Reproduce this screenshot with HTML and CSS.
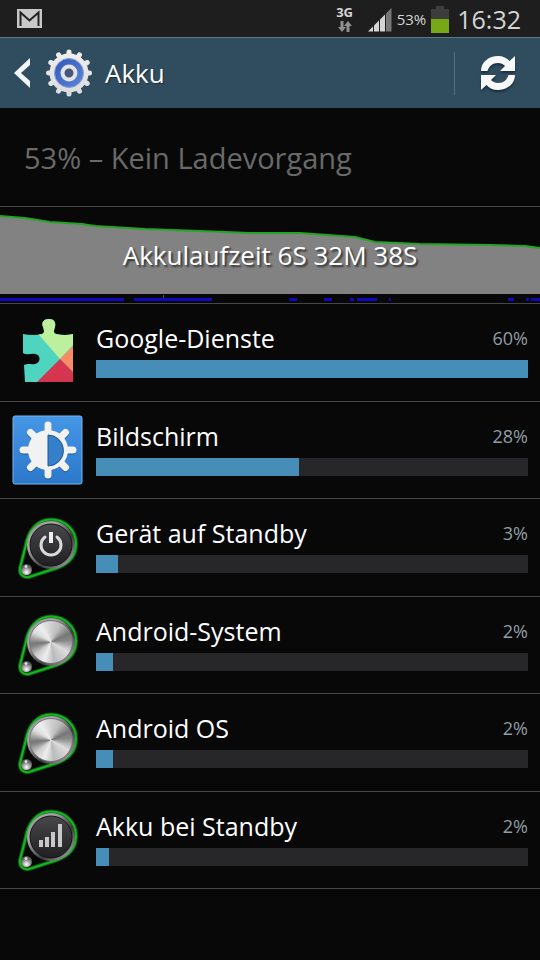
FILE: index.html
```
<!DOCTYPE html>
<html lang="de">
<head>
    <meta charset="UTF-8">
    <meta name="viewport" content="width=device-width, initial-scale=1.0">
    <title>Akku</title>
    <link rel="stylesheet" href="styles.css">
</head>
<body>
    <!-- shared icon parts -->
    <svg class="defs" width="0" height="0" aria-hidden="true">
        <defs>
            <linearGradient id="gearWhite" x1="0" y1="0" x2="0" y2="1">
                <stop offset="0" stop-color="#f0efec"/><stop offset="1" stop-color="#dcdcde"/>
            </linearGradient>
            <linearGradient id="gearBlue" x1="0" y1="0" x2="1" y2="1">
                <stop offset="0" stop-color="#2f58b8"/><stop offset="1" stop-color="#5f86dc"/>
            </linearGradient>
            <linearGradient id="tile" x1="0" y1="0" x2="0" y2="1">
                <stop offset="0" stop-color="#4696e6"/><stop offset="1" stop-color="#2c78cc"/>
            </linearGradient>
            <linearGradient id="rim" x1="0" y1="0" x2="1" y2="1">
                <stop offset="0" stop-color="#8c8c8e"/><stop offset=".3" stop-color="#aaa8ac"/>
                <stop offset=".62" stop-color="#3a3a3c"/><stop offset="1" stop-color="#c4c0c8"/>
            </linearGradient>
            <linearGradient id="dark" x1="0" y1="0" x2="0" y2="1">
                <stop offset="0" stop-color="#48484a"/><stop offset="1" stop-color="#202022"/>
            </linearGradient>
            <radialGradient id="ball" cx=".5" cy=".75" r=".6">
                <stop offset="0" stop-color="#fff"/><stop offset=".5" stop-color="#aaa"/><stop offset="1" stop-color="#555"/>
            </radialGradient>
            <g id="drop">
                <path d="M8.500 29.500C11 14 20 2.500 34 2.500C48 2.500 59 13 59 27C59 40 51 47 40 51L12 60C6 61 2 57 3 51Z" fill="#050805" stroke="#0b5a10" stroke-width="4"/>
                <path d="M8.500 29.500C11 14 20 2.500 34 2.500C48 2.500 59 13 59 27C59 40 51 47 40 51L12 60C6 61 2 57 3 51Z" fill="none" stroke="#19b422" stroke-width="2"/>
                <circle cx="9.500" cy="52.500" r="5.500" fill="url(#ball)"/>
                <path d="M5 51a5 5 0 0 1 9 0z" fill="#666"/>
                <circle cx="9" cy="49.500" r="1.500" fill="#ddd"/>
            </g>
            <g id="darkDisc">
                <circle cx="34" cy="28" r="24" fill="url(#rim)"/>
                <circle cx="34" cy="28" r="21" fill="url(#dark)" stroke="#151515"/>
            </g>
        </defs>
    </svg>

    <div class="statusbar">
        <svg class="mail" width="25" height="19" viewBox="0 0 25 19">
            <rect width="25" height="19" fill="#c8c8c8"/>
            <path d="M3.500 17V3.500L12.500 11.500L21.500 3.500V17" fill="none" stroke="#222" stroke-width="2"/>
        </svg>
        <div class="network">
            <span>3G</span>
            <svg width="14" height="11" viewBox="0 0 14 11">
                <path d="M2.500 0h3v6H8L4 11L0 6h2.500zM8.500 11h3V5H14L10 0L6 5h2.500z" fill="#909090"/>
            </svg>
        </div>
        <svg class="signal" width="24" height="24" viewBox="0 0 24 24">
            <path d="M0 23.500L5 18.500V23.500zM6 17.500L11 12.500V23.500H6zM12 11.500L17 6.500V23.500H12z" fill="#d4d4d4"/>
            <path d="M18 5.500L23.500 0V23.500H18z" fill="#777"/>
        </svg>
        <span class="charge">53%</span>
        <svg class="battery" width="18" height="28" viewBox="0 0 18 28">
            <path d="M5 1H13V4H18V28H0V4H5z" fill="#3d3d3d"/>
            <rect y="14" width="18" height="14" fill="#75aa16"/>
        </svg>
        <time class="clock">16:32</time>
    </div>

    <header class="actionbar">
        <button class="back" type="button" aria-label="Zurück">
            <svg width="18" height="32" viewBox="0 0 18 32">
                <path d="M16 1V8L7 16L16 24V31L0 16z" fill="#f2f6f8"/>
            </svg>
        </button>
        <svg class="gear" width="48" height="48" viewBox="0 0 48 48">
            <g stroke="url(#gearWhite)" stroke-width="5" stroke-linecap="round">
                <path d="M24 3V45M3.500 24.100L44.500 23.900M13.500 5.800L34.500 42.200M34.500 5.800L13.500 42.200M5.800 13.500L42.200 34.500M42.200 13.500L5.800 34.500"/>
            </g>
            <circle cx="24" cy="24" r="19.500" fill="url(#gearWhite)"/>
            <circle cx="24" cy="24" r="14.500" fill="url(#gearBlue)" stroke="#8ba2d4"/>
            <circle cx="24" cy="24" r="6.500" fill="#46597c" stroke="#e2e4e8" stroke-width="4"/>
        </svg>
        <h1>Akku</h1>
        <button class="refresh" type="button" aria-label="Aktualisieren">
            <svg width="36" height="36" viewBox="0 0 36 36">
                <path d="M1 16C1 7 9 1 18 1C23 1 27 3 29.500 6L35 1V16H20L25 11C23 9 21 8 18 8C12.500 8 9 11 7.500 16z" fill="#f6f8fa"/>
                <path d="M35 20C35 29 27 35 18 35C13 35 9 33 6.500 30L1 35V20H16L11 25C13 27 15 28 18 28C23.500 28 27 25 28.500 20z" fill="#f6f8fa"/>
            </svg>
        </button>
    </header>

    <main>
        <p class="status">53% – Kein Ladevorgang</p>

        <a class="history" href="#">
            <svg class="graph" viewBox="0 0 540 87" preserveAspectRatio="none">
                <path d="M0 9L25 11L50 15L82 17L95 19L145 22L200 24L250 26L300 26L355 30L375 35L420 37L490 38L525 39L540 41V87H0z" fill="#828282"/>
                <path d="M0 9L25 11L50 15L82 17L95 19L145 22L200 24L250 26L300 26L355 30L375 35L420 37L490 38L525 39L540 41" fill="none" stroke="#22a622" stroke-width="2"/>
            </svg>
            <svg class="awake" viewBox="0 0 540 9" preserveAspectRatio="none">
                <path d="M0 5.500H124M134 5.500H212M289 5.500H297M324 5.500H332M350 5.500H354M357 5.500H377M389 5.500H391M508 5.500H514M526 5.500H529M531 5.500H540" stroke="#1008c0" stroke-width="3"/>
                <path d="M163.500 1V4" stroke="#3c5a48"/>
            </svg>
            <span class="runtime">Akkulaufzeit 6S 32M 38S</span>
        </a>

        <ul class="usage">
            <li>
                <svg class="icon" width="72" height="72" viewBox="0 0 72 72">
                    <clipPath id="puzzle">
                        <path d="M11 17Q21 19 30 17C33 16 32 13 31 10C29 5 32 2 37 2C42 2 44 5 43 10C42 13 41 16 44 17Q53 19 61 17V65H13L12 48C17 46 19 48 23 47C29 46 29 37 23 37C19 36 16 39 11 36z"/>
                    </clipPath>
                    <g clip-path="url(#puzzle)">
                        <rect width="72" height="72" fill="#4fd4c0"/>
                        <path d="M21 11L48 42L72 16V0H20z" fill="#bcf09c"/>
                        <path d="M48 42L72 18V66z" fill="#f88a66"/>
                        <path d="M48 42L72 66H24z" fill="#d4354f"/>
                    </g>
                </svg>
                <div class="info">
                    <span class="name">Google-Dienste</span><span class="percent">60%</span>
                    <div class="bar"><div class="fill" style="width: 100%"></div></div>
                </div>
            </li>
            <li>
                <svg class="icon" width="72" height="72" viewBox="0 0 72 72">
                    <rect x="1" y="2" width="69" height="68" rx="2" fill="url(#tile)" stroke="#78b4f0"/>
                    <g stroke="#1c5796" stroke-width="7" stroke-linecap="round" transform="translate(0 1)">
                        <path d="M36 11V61M11 36H61M18.500 18.500L53.500 53.500M18.500 53.500L53.500 18.500"/>
                    </g>
                    <path d="M36 11V61M11 36H61M18.500 18.500L53.500 53.500M18.500 53.500L53.500 18.500" stroke="#f2f2f2" stroke-width="7" stroke-linecap="round"/>
                    <circle cx="36" cy="36" r="20" fill="#f2f2f2"/>
                    <path d="M36 21A15 15 0 0 1 36 52z" fill="#3580cc" stroke="#24568c"/>
                </svg>
                <div class="info">
                    <span class="name">Bildschirm</span><span class="percent">28%</span>
                    <div class="bar"><div class="fill" style="width: 47%"></div></div>
                </div>
            </li>
            <li>
                <svg class="icon drop" width="62" height="62" viewBox="0 0 62 62">
                    <use href="#drop"/>
                    <use href="#darkDisc"/>
                    <path d="M28 20A10 10 0 1 0 40 20" fill="none" stroke="#dadada" stroke-width="3" stroke-linecap="round"/>
                    <path d="M34 15V26" stroke="#eee" stroke-width="4"/>
                </svg>
                <div class="info">
                    <span class="name">Gerät auf Standby</span><span class="percent">3%</span>
                    <div class="bar"><div class="fill" style="width: 5%"></div></div>
                </div>
            </li>
            <li>
                <svg class="icon drop" width="62" height="62" viewBox="0 0 62 62">
                    <use href="#drop"/>
                    <circle cx="34" cy="28" r="24" fill="url(#rim)"/>
                    <foreignObject x="12" y="6" width="44" height="44"><div class="metal"></div></foreignObject>
                </svg>
                <div class="info">
                    <span class="name">Android-System</span><span class="percent">2%</span>
                    <div class="bar"><div class="fill" style="width: 4%"></div></div>
                </div>
            </li>
            <li>
                <svg class="icon drop" width="62" height="62" viewBox="0 0 62 62">
                    <use href="#drop"/>
                    <circle cx="34" cy="28" r="24" fill="url(#rim)"/>
                    <foreignObject x="12" y="6" width="44" height="44"><div class="metal"></div></foreignObject>
                </svg>
                <div class="info">
                    <span class="name">Android OS</span><span class="percent">2%</span>
                    <div class="bar"><div class="fill" style="width: 4%"></div></div>
                </div>
            </li>
            <li>
                <svg class="icon drop" width="62" height="62" viewBox="0 0 62 62">
                    <use href="#drop"/>
                    <use href="#darkDisc"/>
                    <path d="M22 31h4v7h-4zM28 28h4v10h-4zM34 23h4v15h-4zM41 15h4v23h-4z" fill="#c8c8c8"/>
                </svg>
                <div class="info">
                    <span class="name">Akku bei Standby</span><span class="percent">2%</span>
                    <div class="bar"><div class="fill" style="width: 3%"></div></div>
                </div>
            </li>
        </ul>
    </main>
</body>
</html>
```
FILE: styles.css
```
* {
    box-sizing: border-box;
}
body {
    margin: 0;
    min-height: 100vh;
    background: #080808;
    color: #fff;
    font-family: "Open Sans", "Noto Sans", sans-serif;
}
svg {
    display: block;
    flex-shrink: 0;
}
.defs {
    position: absolute;
}
button {
    padding: 0;
    border: none;
    background: none;
    cursor: pointer;
}

.statusbar {
    display: flex;
    align-items: center;
    height: 37px;
    padding: 0 19px 0 17px;
    background: #1e1e1e;
    color: #d4d4d4;
}
.mail {
    margin-right: auto;
}
.network {
    display: flex;
    flex-direction: column;
    align-items: center;
    gap: 2px;
    margin-right: 15px;
    font-size: 13px;
    font-weight: bold;
    line-height: 13px;
}
.signal {
    margin-top: 2px;
}
.charge {
    width: 39px;
    text-align: center;
    font-size: 15px;
}
.clock {
    width: 72px;
    text-align: right;
    font-size: 25px;
    line-height: 36px;
}

.actionbar {
    display: flex;
    align-items: center;
    height: 71px;
    padding-left: 14px;
    background: #304d60;
    border-top: 1px solid #5c7889;
}
.gear {
    margin: 0 12px 0 13px;
}
h1 {
    margin: 0 auto 0 0;
    font-size: 26px;
    font-weight: normal;
    text-shadow: 1px 1px 1px #1a2a34;
}
.refresh {
    display: flex;
    align-items: center;
    justify-content: center;
    width: 86px;
    height: 43px;
    border-left: 1px solid #52707f;
}
.refresh svg {
    filter: drop-shadow(0 2px 1px #1c2c38);
}

.status {
    margin: 0;
    padding: 2px 24px 0;
    font-size: 29px;
    line-height: 96px;
    color: #6a6a6a;
}
.history {
    display: block;
    position: relative;
    border-top: 1px solid #464646;
    border-bottom: 1px solid #464646;
    color: #fff;
    text-decoration: none;
}
.graph {
    width: 100%;
    height: 87px;
}
.awake {
    width: 100%;
    height: 9px;
}
.runtime {
    position: absolute;
    inset: 0;
    text-align: center;
    font-size: 26px;
    line-height: 96px;
    text-shadow: 2px 2px 2px #333;
}

.usage {
    margin: 0;
    padding: 0;
    list-style: none;
}
.usage li {
    display: flex;
    align-items: center;
    height: 98px;
    padding-right: 12px;
    border-bottom: 1px solid #464646;
}
.usage li:nth-child(even) {
    height: 97px;
}
.icon {
    margin: 0 12px;
}
.icon.drop {
    margin: 0 17px;
}
.info {
    flex: 1;
    display: grid;
    grid-template-columns: 1fr auto;
    align-items: center;
    row-gap: 5px;
    padding-bottom: 6px;
}
.name {
    font-size: 25px;
    line-height: 34px;
}
.percent {
    font-size: 18px;
    color: #8f9da4;
}
.bar {
    grid-column: 1 / 3;
    height: 18px;
    background: #27272a;
}
.fill {
    height: 100%;
    background: #468db7;
}
.metal {
    width: 44px;
    height: 44px;
    border: 1px solid #777;
    border-radius: 50%;
    background: conic-gradient(#d0d0d0, #bbb 30deg, #777 65deg, #888 85deg, #ddd 120deg, #bbb 170deg, #eee 200deg, #ccc 230deg, #888 255deg, #777 265deg, #ddd 300deg, #eee 325deg, #d0d0d0);
}
```
